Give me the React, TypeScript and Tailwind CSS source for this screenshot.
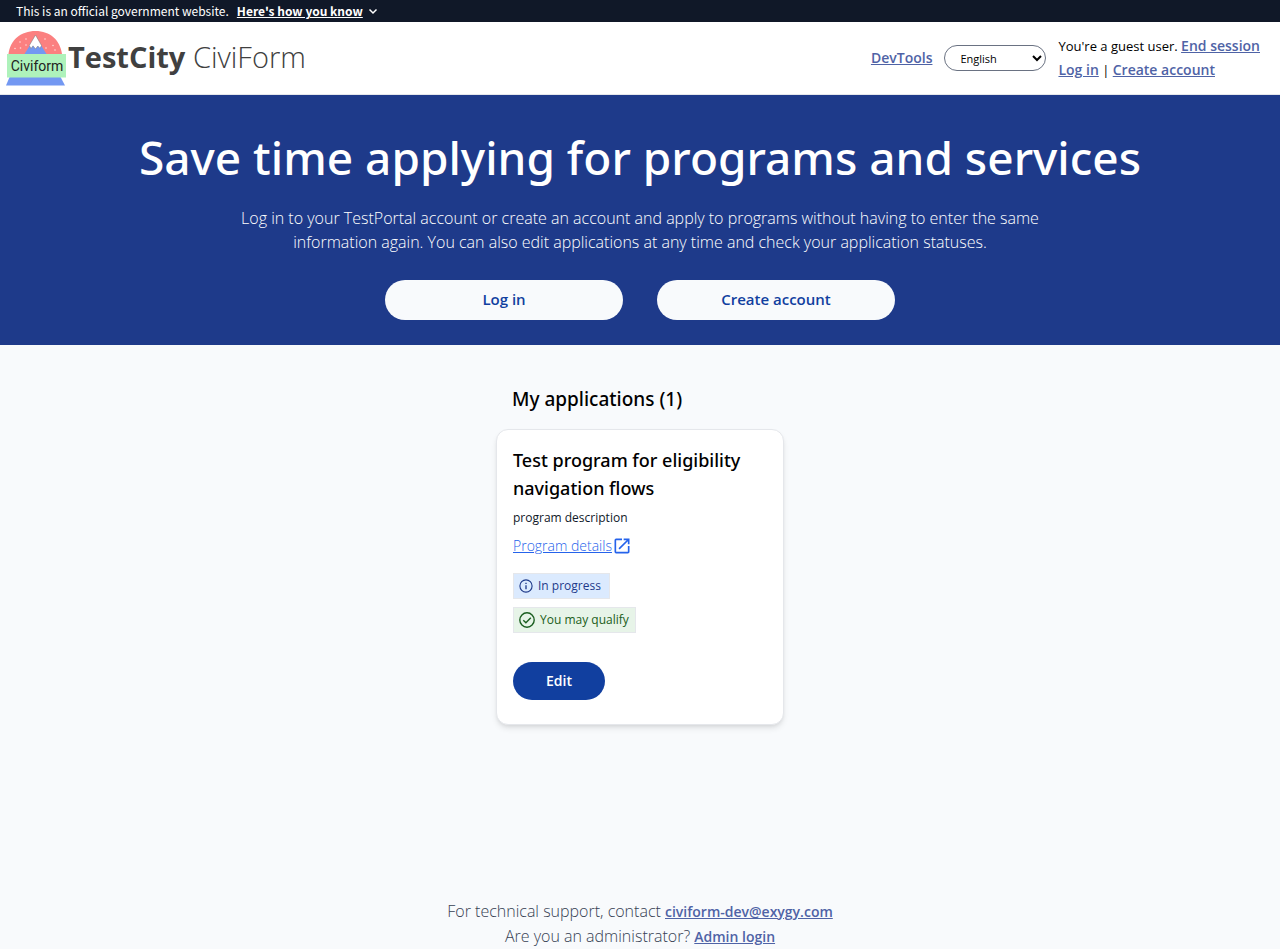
import React from "react";

const link = "font-semibold text-[14px] text-[#4f63a6] underline";

function CiviformLogo() {
  return (
    <svg viewBox="0 0 60 56" className="h-14 w-[60px]" role="img" aria-label="Civiform logo">
      <path d="M2.5 24C4 10 15 1 29.500 1S54 10 56 24Z" fill="#fb8080" />
      <path d="M18.500 24 29.500 6.500 40.500 24Z" fill="#7398f2" />
      <path d="M29.500 5 23.300 15.500 25 18.500 27 15.800 29.500 19 31.800 16 34 18.300 35.500 15.500Z" fill="#fff" stroke="#777" strokeWidth="0.500" />
      <g fill="#ffd9d5">
        <circle cx="20" cy="9" r="0.800" />
        <circle cx="14" cy="12" r="0.800" />
        <circle cx="20" cy="15" r="0.800" />
        <circle cx="14.500" cy="18" r="0.800" />
        <circle cx="9" cy="18.500" r="0.800" />
        <circle cx="39" cy="9" r="0.800" />
        <circle cx="47" cy="15.500" r="0.800" />
        <circle cx="40" cy="18" r="0.800" />
        <circle cx="49" cy="20" r="0.800" />
      </g>
      <path d="M4 46H54L59 55.500H0Z" fill="#7398f2" />
      <path d="M1 24H60V47.500H1Z" fill="#aef2bb" />
      <text x="31" y="41" textAnchor="middle" fontSize="14" fill="#222" fontFamily="Roboto, sans-serif">
        Civiform
      </text>
    </svg>
  );
}

function GovernmentBanner() {
  return (
    <div className="flex h-[22px] items-center gap-2 bg-gray-900 px-4 font-['Noto_Sans_CJK_JP','Open_Sans',sans-serif] text-[12px] leading-4 text-white">
      <span>This is an official government website.</span>
      <button type="button" className="flex items-center gap-1 font-bold">
        <span className="underline">Here's how you know</span>
        <svg viewBox="0 0 12 12" className="size-3" fill="none" stroke="currentColor" strokeWidth="1.500" aria-hidden="true">
          <path d="m2.500 4.500 3.500 3.500 3.500-3.500" />
        </svg>
      </button>
    </div>
  );
}

function Header() {
  return (
    <header className="flex h-[73px] items-center justify-between border-b border-gray-200 bg-white pr-5 pl-1.5">
      <a href="#home" className="flex items-center gap-0.5 text-[#404040]">
        <CiviformLogo />
        <span className="pb-0.5 text-[29px] leading-9 font-light">
          <b className="font-bold">TestCity</b> CiviForm
        </span>
      </a>
      <div className="flex items-center gap-3 text-[13px] leading-6">
        <a href="#dev" className={link}>DevTools</a>
        <select aria-label="Language" className="h-[26px] w-[102px] rounded-full border border-gray-500 bg-white pl-[11px] text-[11px] text-black">
          <option>English</option>
        </select>
        <div>
          <p>
            You're a guest user. <a href="#end" className={link}>End session</a>
          </p>
          <p>
            <a href="#login" className={link}>Log in</a> | <a href="#create" className={link}>Create account</a>
          </p>
        </div>
      </div>
    </header>
  );
}

function Hero() {
  return (
    <section className="flex flex-col items-center bg-[#1e3a8a] px-8 pt-[30px] pb-[25px] text-center text-white">
      <h1 className="font-['Noto_Sans','Open_Sans',sans-serif] text-[46px] leading-[64px] font-medium">
        Save time applying for programs and services
      </h1>
      <p className="mt-[17px] max-w-[820px] text-[16px] leading-6 font-light">
        Log in to your TestPortal account or create an account and apply to programs without having to enter the same
        information again. You can also edit applications at any time and check your application statuses.
      </p>
      <div className="mt-[26px] flex gap-[34px] text-[15px] leading-6 font-semibold text-[#113f9f]">
        <button type="button" className="h-10 w-[238px] rounded-full bg-[#f8fafc] pb-0.5">Log in</button>
        <button type="button" className="h-10 w-[238px] rounded-full bg-[#f8fafc] pb-0.5">Create account</button>
      </div>
    </section>
  );
}

function ProgramCard() {
  return (
    <article className="flex flex-col items-start rounded-xl border border-gray-200 bg-white px-4 pt-4 pb-6 shadow-md">
      <h3 className="font-['Noto_Sans','Open_Sans',sans-serif] text-[18px] leading-7 font-medium">
        Test program for eligibility navigation flows
      </h3>
      <p className="mt-2 text-[12px] leading-4 text-gray-900">program description</p>
      <a href="#details" className="mt-2 flex items-center text-[14px] leading-6 font-light text-[#2563eb]">
        <span className="underline">Program details</span>
        <svg viewBox="0 0 24 24" className="size-5" fill="currentColor" aria-hidden="true">
          <path d="M19 19H5V5h7V3H5a2 2 0 0 0-2 2v14a2 2 0 0 0 2 2h14c1.100 0 2-.900 2-2v-7h-2v7zM14 3v2h3.590l-9.830 9.830 1.410 1.410L19 6.410V10h2V3h-7z" />
        </svg>
      </a>
      <div className="mt-[15px] flex h-[26px] items-center gap-1 border border-gray-200 bg-blue-100 pr-2 pl-1 text-[12px] text-[#1e3a8a]">
        <svg viewBox="0 0 24 24" className="size-4" fill="currentColor" aria-hidden="true">
          <path d="M11 7h2v2h-2zm0 4h2v6h-2zm1-9a10 10 0 1 0 0 20 10 10 0 0 0 0-20zm0 18.300a8.300 8.300 0 1 1 0-16.600 8.300 8.300 0 0 1 0 16.600z" />
        </svg>
        In progress
      </div>
      <div className="mt-2 flex h-[26px] items-center gap-1 border border-gray-200 bg-[#e7f4e8] pr-1.5 pl-1 text-[12px] text-[#1b5e20]">
        <svg viewBox="0 0 18 18" className="size-[18px]" fill="none" stroke="currentColor" strokeWidth="1.400" aria-hidden="true">
          <circle cx="9" cy="9" r="7.200" />
          <path d="m5.300 9.200 2.600 2.600 4.900-5" />
        </svg>
        You may qualify
      </div>
      <button type="button" className="mt-[29px] h-[38px] w-[92px] rounded-full bg-[#113f9f] pb-0.5 text-[14px] font-semibold text-white">
        Edit
      </button>
    </article>
  );
}

export default function App() {
  return (
    <div className="flex min-h-screen flex-col bg-[#f8fafc] font-['Open_Sans','Noto_Sans',sans-serif] text-black">
      <GovernmentBanner />
      <Header />
      <Hero />
      <main className="mx-auto w-72 pt-10">
        <h2 className="px-4 font-['Noto_Sans','Open_Sans',sans-serif] text-[19px] leading-7 font-medium">My applications (1)</h2>
        <div className="mt-4">
          <ProgramCard />
        </div>
      </main>
      <footer className="mt-auto pt-12 text-center text-[16px] leading-6 font-light text-gray-700">
        <p>
          For technical support, contact <a href="mailto:civiform-dev@exygy.com" className={link}>civiform-dev@exygy.com</a>
        </p>
        <p>
          Are you an administrator? <a href="#admin" className={link}>Admin login</a>
        </p>
      </footer>
    </div>
  );
}
